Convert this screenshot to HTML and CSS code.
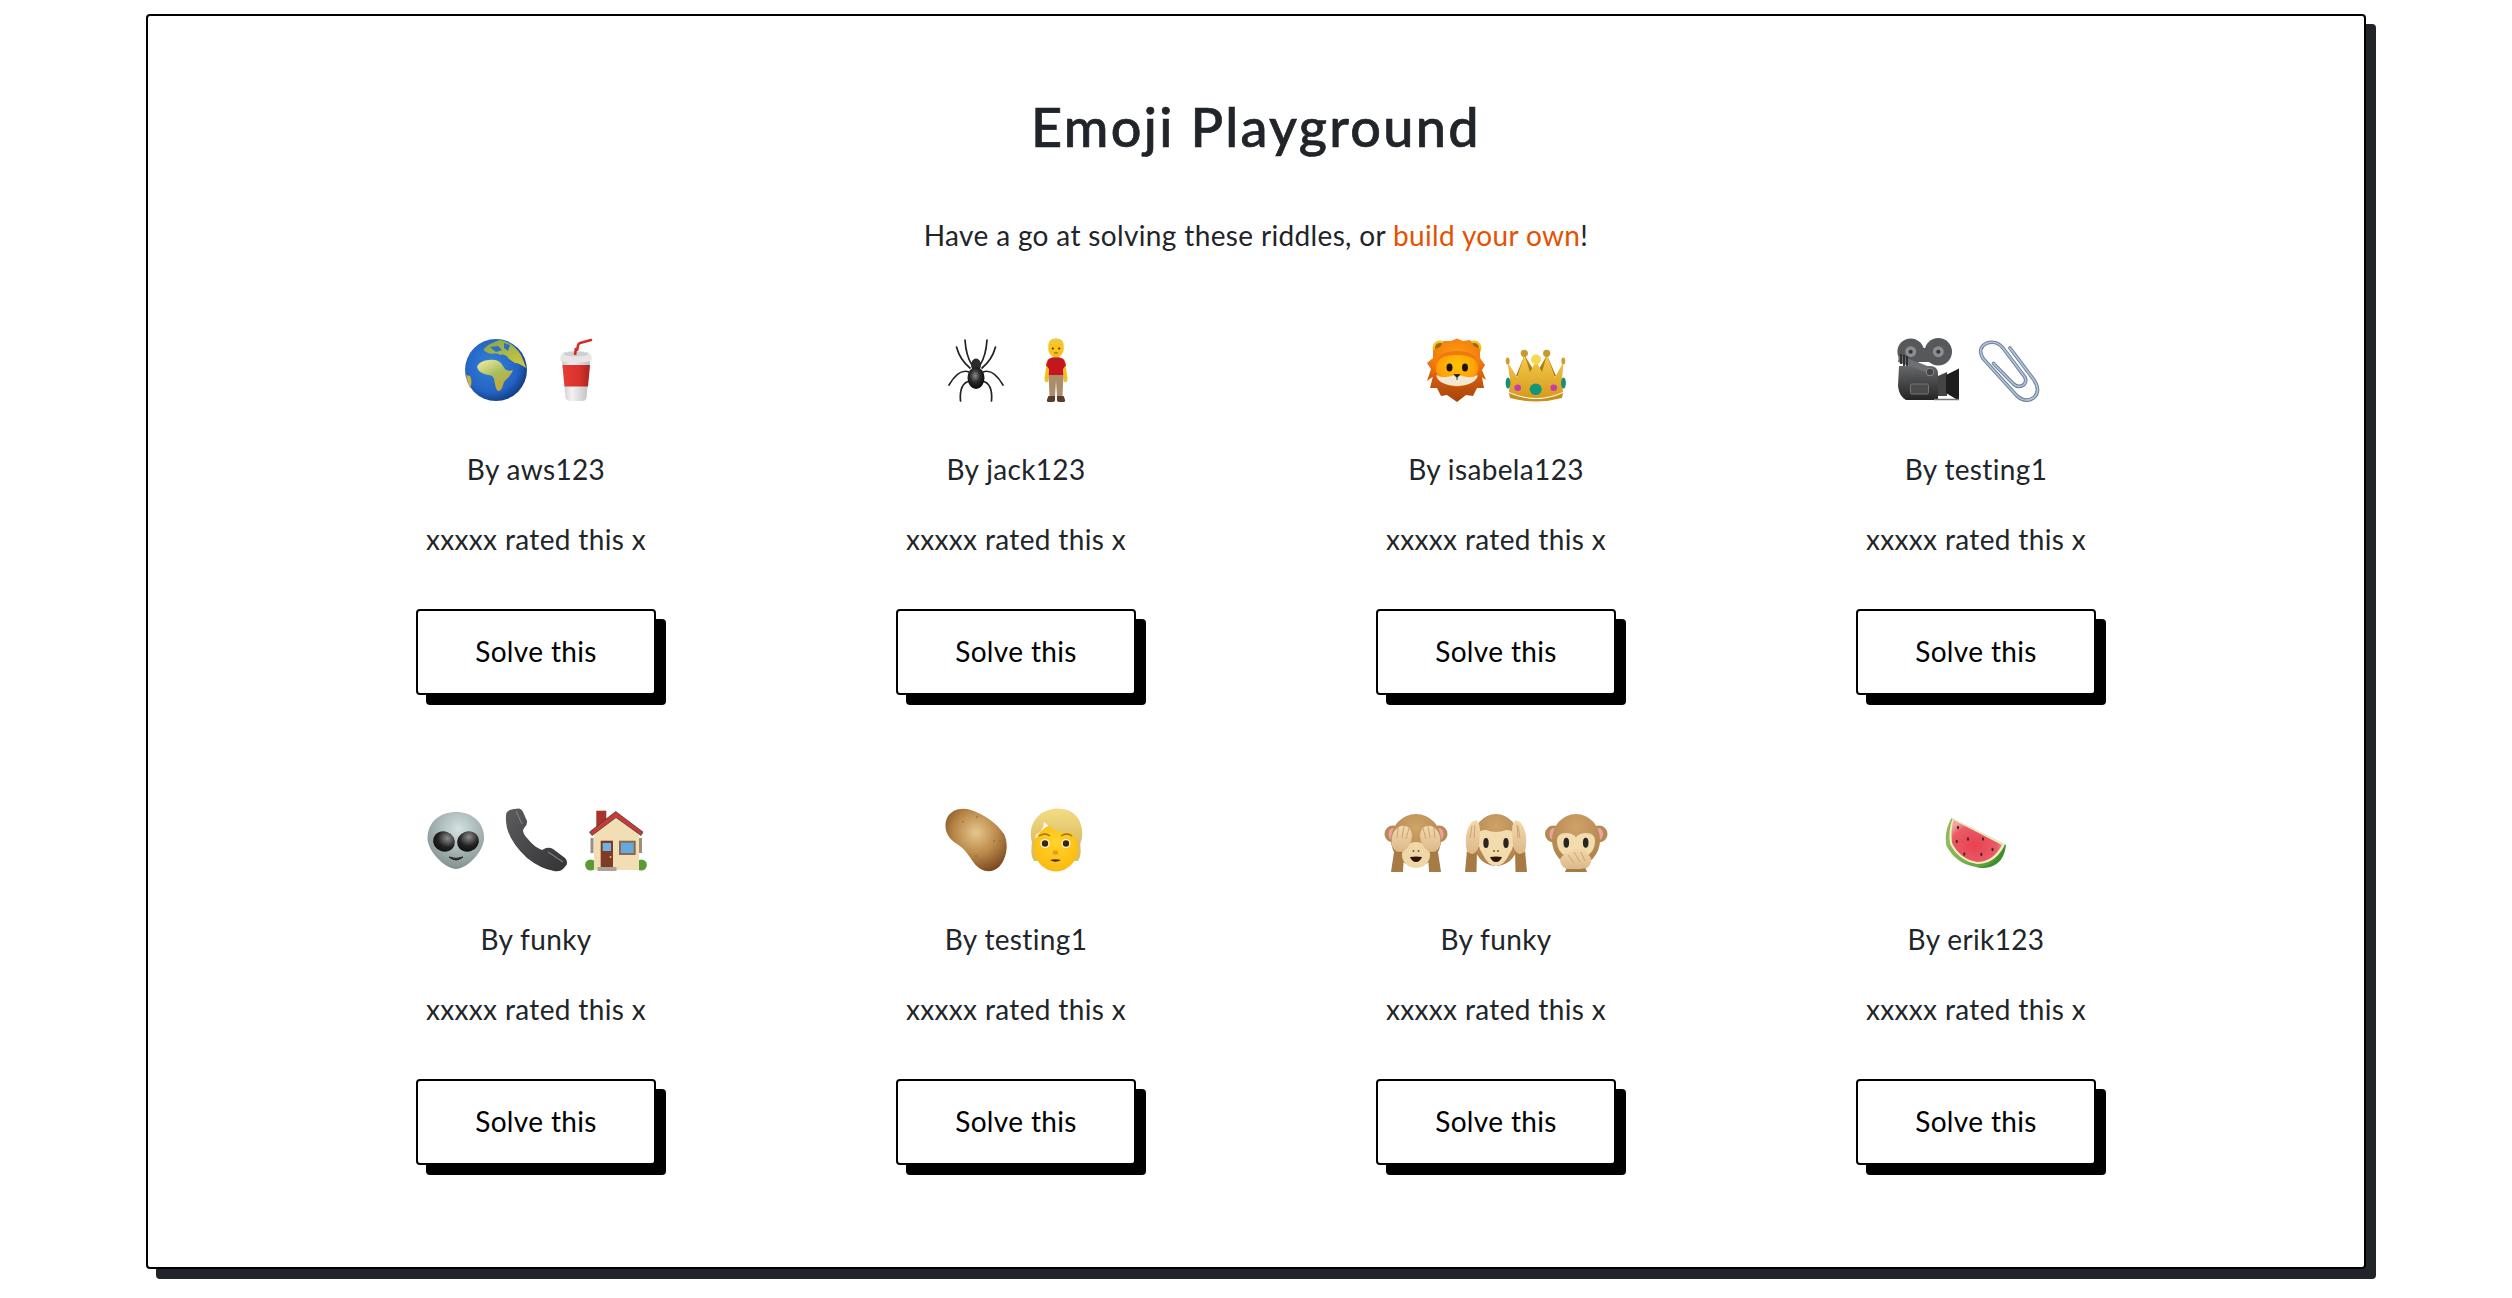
FILE: index.html
```html
<!DOCTYPE html>
<html lang="en">
<head>
    <meta charset="UTF-8">
    <meta name="viewport" content="width=device-width, initial-scale=1.0">
    <title>Emoji Playground</title>
    <link rel="stylesheet" href="styles.css">
</head>
<body>
    <!-- Shared gradients for the emoji drawings -->
    <svg class="defs" aria-hidden="true">
        <defs>
            <radialGradient id="gSea" cx="0.42" cy="0.42" r="0.62"><stop offset="0" stop-color="#3380d8"/><stop offset="0.7" stop-color="#2364c4"/><stop offset="1" stop-color="#123a80"/></radialGradient>
            <linearGradient id="gLand" x1="0" y1="0" x2="0.6" y2="1"><stop offset="0" stop-color="#f5f0a4"/><stop offset="0.55" stop-color="#a9bd5e"/><stop offset="1" stop-color="#c9a53a"/></linearGradient>
            <linearGradient id="gNorth" x1="0" y1="0" x2="1" y2="1"><stop offset="0" stop-color="#7fa64e"/><stop offset="1" stop-color="#d8c93e"/></linearGradient>
            <linearGradient id="gCup" x1="0" y1="0" x2="1" y2="0"><stop offset="0" stop-color="#c9c9c9"/><stop offset="0.35" stop-color="#f2f2f2"/><stop offset="1" stop-color="#bdbdbd"/></linearGradient>
            <linearGradient id="gRed" x1="0" y1="0" x2="1" y2="0"><stop offset="0" stop-color="#e63c34"/><stop offset="0.6" stop-color="#d8332c"/><stop offset="1" stop-color="#a92420"/></linearGradient>
            <radialGradient id="gSpider" cx="0.45" cy="0.4" r="0.6"><stop offset="0" stop-color="#8a8a8a"/><stop offset="0.5" stop-color="#2a2a2a"/><stop offset="1" stop-color="#0a0a0a"/></radialGradient>
            <radialGradient id="gMane" cx="0.5" cy="0.35" r="0.7"><stop offset="0" stop-color="#ff9a12"/><stop offset="0.65" stop-color="#f27a0c"/><stop offset="1" stop-color="#d35f0a"/></radialGradient>
            <linearGradient id="gManeLow" x1="0" y1="0" x2="0" y2="1"><stop offset="0" stop-color="#d9610f"/><stop offset="1" stop-color="#a8420b"/></linearGradient>
            <radialGradient id="gLionFace" cx="0.5" cy="0.4" r="0.6"><stop offset="0" stop-color="#ffc400"/><stop offset="0.7" stop-color="#ffa408"/><stop offset="1" stop-color="#f58a0a"/></radialGradient>
            <linearGradient id="gGold" x1="0" y1="0" x2="0" y2="1"><stop offset="0" stop-color="#f4cc4d"/><stop offset="1" stop-color="#d79a1e"/></linearGradient>
            <linearGradient id="gGoldDark" x1="0" y1="0" x2="0" y2="1"><stop offset="0" stop-color="#c98f22"/><stop offset="1" stop-color="#9a6a12"/></linearGradient>
            <linearGradient id="gCam" x1="0" y1="0" x2="0" y2="1"><stop offset="0" stop-color="#65676a"/><stop offset="1" stop-color="#262425"/></linearGradient>
            <radialGradient id="gAlien" cx="0.55" cy="0.3" r="0.75"><stop offset="0" stop-color="#d4e2e2"/><stop offset="0.6" stop-color="#9fadad"/><stop offset="1" stop-color="#7f8b8b"/></radialGradient>
            <radialGradient id="gAlienEye" cx="0.6" cy="0.3" r="0.8"><stop offset="0" stop-color="#8d8f8f"/><stop offset="0.55" stop-color="#222"/><stop offset="1" stop-color="#0c0c0c"/></radialGradient>
            <linearGradient id="gPhone" x1="0" y1="0" x2="1" y2="1"><stop offset="0" stop-color="#5c5c5e"/><stop offset="1" stop-color="#333335"/></linearGradient>
            <radialGradient id="gPotato" cx="0.5" cy="0.38" r="0.65"><stop offset="0" stop-color="#e6c68c"/><stop offset="0.55" stop-color="#b98849"/><stop offset="1" stop-color="#7c4a22"/></radialGradient>
            <radialGradient id="gFace" cx="0.5" cy="0.4" r="0.65"><stop offset="0" stop-color="#ffd42a"/><stop offset="1" stop-color="#fbb80f"/></radialGradient>
            <linearGradient id="gBlond" x1="0" y1="0" x2="0" y2="1"><stop offset="0" stop-color="#f3dd85"/><stop offset="1" stop-color="#d9b95c"/></linearGradient>
            <radialGradient id="gMonkey" cx="0.5" cy="0.25" r="0.8"><stop offset="0" stop-color="#cfa268"/><stop offset="1" stop-color="#ab7f49"/></radialGradient>
            <linearGradient id="gHand" x1="0" y1="0" x2="0" y2="1"><stop offset="0" stop-color="#f3d9ad"/><stop offset="1" stop-color="#dcb888"/></linearGradient>
            <radialGradient id="gMelon" cx="0.45" cy="0.6" r="0.6"><stop offset="0" stop-color="#e8424f"/><stop offset="0.75" stop-color="#ea5a66"/><stop offset="1" stop-color="#f2a2a0"/></radialGradient>
            <linearGradient id="gRind" x1="0" y1="0" x2="1" y2="0"><stop offset="0" stop-color="#8fbd5f"/><stop offset="1" stop-color="#3d8f2c"/></linearGradient>
        </defs>
    </svg>

    <main class="card">
        <h1 class="titulo">Emoji Playground</h1>
        <p class="intro">Have a go at solving these riddles, or <a href="#" class="enlace">build your own</a>!</p>

        <section class="acertijos">
            <article class="acertijo">
                <div class="emojis">
                    <!-- globe -->
                    <svg class="emoji" viewBox="0 0 64 64" role="img" aria-label="globe">
                        <circle cx="32" cy="32" r="31" fill="url(#gSea)"/>
                        <path d="M13 29C14 25 20 22 25 22C30 21 34 22 37 25L41 31C43 33 46 33 49 32C47 38 42 41 40 44L38 50C36 54 33 54 32 50C30 44 31 40 28 38C24 36 15 37 13 29Z" fill="url(#gLand)"/>
                        <path d="M20 11C24 6 30 4 36 2C44 3 52 9 57 17C59 22 61 26 62 30C58 27 54 25 51 25L45 21C42 16 38 16 36 17C33 14 28 17 24 15C22 14 19 13 20 11Z" fill="url(#gNorth)"/>
                        <path d="M2 37L6 38C8 42 8 46 6 50C4 46 3 42 2 37Z" fill="#c6b23c"/>
                        <path d="M26 9L34 8L38 12L32 14ZM40 5L46 7L44 13L40 10Z" fill="#2d6fc6"/>
                    </svg>
                    <!-- cup -->
                    <svg class="emoji" viewBox="0 0 64 64" role="img" aria-label="cup with straw">
                        <path d="M32 18L34 7.5Q34.5 5.500 36 5L47 2" fill="none" stroke="#d22c26" stroke-width="2.600" stroke-linecap="round"/>
                        <path d="M18 23H46L42.500 60Q42 63 38 63H26Q22.500 63 21.500 60Z" fill="url(#gCup)"/>
                        <path d="M18.500 27H46L44 48.500H20.500Z" fill="url(#gRed)"/>
                        <path d="M19 14.500Q32 11 45 14.500L47.500 18V23Q32 26 16.500 23V18Z" fill="#e6e6e6"/>
                        <ellipse cx="32" cy="16" rx="12" ry="2.500" fill="#cfcfcf"/>
                        <path d="M31 17L32 10" stroke="#d22c26" stroke-width="2.600"/>
                    </svg>
                </div>
                <p class="autor">By aws123</p>
                <p class="valoracion">xxxxx rated this x</p>
                <button class="resolver">Solve this</button>
            </article>

            <article class="acertijo">
                <div class="emojis">
                    <!-- spider -->
                    <svg class="emoji" viewBox="0 0 64 64" role="img" aria-label="spider">
                        <g fill="none" stroke="#222" stroke-width="1.700" stroke-linecap="round" stroke-linejoin="round">
                            <path d="M28 27Q22 18 21 2M26 30Q16 22 12.500 9M25 34Q15 30 5 47M26 43Q15 45 16.500 63"/>
                            <path d="M36 27Q42 18 43 2M38 30Q48 22 51.500 9M39 34Q49 30 59 47M38 43Q49 45 47.500 63"/>
                        </g>
                        <ellipse cx="32" cy="27" rx="5" ry="6.500" fill="#2b2b2b"/>
                        <ellipse cx="32" cy="40" rx="8.500" ry="11" fill="url(#gSpider)"/>
                    </svg>
                    <!-- man standing -->
                    <svg class="emoji" viewBox="0 0 64 64" role="img" aria-label="man">
                        <path d="M23 21L20.500 42Q22 46 24.500 43L26 25ZM41 21L43.500 42Q42 46 39.500 43L38 25Z" fill="#f7bb1f"/>
                        <path d="M24.500 35H39.500L38.500 58H33L32 43L31 58H25.500Z" fill="#ab8d6e"/>
                        <path d="M24.500 21Q32 17 39.500 21L42 27L39 31V37H25V31L22 27Z" fill="#c4161c"/>
                        <path d="M24.500 58H31V62Q31 64 28 64H24Q21.500 63.500 24.500 58ZM33 58H39.500Q42.500 63.500 40 64H36Q33 64 33 62Z" fill="#5a3d28"/>
                        <ellipse cx="32" cy="10.500" rx="7.800" ry="9" fill="#fcc21b"/>
                        <path d="M24.500 10Q23 .5 32 .3Q41 .5 39.500 10Q38 5 33 6Q28 7 26 5.500Q25 7.500 24.500 10Z" fill="#f2c63e"/>
                        <circle cx="28.800" cy="10.500" r="1" fill="#3a2a12"/><circle cx="35.200" cy="10.500" r="1" fill="#3a2a12"/>
                        <path d="M30 15H34" stroke="#7b5a1c" stroke-width="1"/>
                    </svg>
                </div>
                <p class="autor">By jack123</p>
                <p class="valoracion">xxxxx rated this x</p>
                <button class="resolver">Solve this</button>
            </article>

            <article class="acertijo">
                <div class="emojis">
                    <!-- lion -->
                    <svg class="emoji" viewBox="0 0 64 64" role="img" aria-label="lion">
                        <circle cx="16" cy="10" r="7.500" fill="#f0c21c"/><circle cx="16" cy="10" r="5" fill="#a3640f"/>
                        <circle cx="50" cy="10" r="7.500" fill="#f0c21c"/><circle cx="50" cy="10" r="5" fill="#a3640f"/>
                        <path d="M10 34L6 50L13 50L17 58L23 57L33 64L42 57L49 58L53 50L60 50L57 34Z" fill="url(#gManeLow)"/>
                        <path d="M33 .5L39 3L46 2L50 8L56 11L56 20L61 27L58 32L62 42L56 38L50 30H15L10 38L3 43L7 31L3 25L9 20L9 12L16 9L20 3L27 3Z" fill="url(#gMane)"/>
                        <ellipse cx="33" cy="31" rx="21" ry="17.500" fill="url(#gLionFace)"/>
                        <path d="M12 24Q16 13 33 13Q50 13 54 24Q46 16 33 17Q20 16 12 24Z" fill="#ee7a0c"/>
                        <path d="M12 37Q22 42 33 36Q44 42 54 37Q52 47 33 48Q14 47 12 37Z" fill="#f1e7d2"/>
                        <ellipse cx="25.500" cy="29.500" rx="3" ry="4" fill="#1c1208"/><ellipse cx="41" cy="29.500" rx="3" ry="4" fill="#1c1208"/>
                        <path d="M30 36.500H36L33 39.500ZM33 39.500V42" fill="#22160c" stroke="#22160c" stroke-width=".8"/>
                    </svg>
                    <!-- crown -->
                    <svg class="emoji" viewBox="0 0 64 64" role="img" aria-label="crown">
                        <path d="M12 38L20.500 17L32 36L43 17L52 38Z" fill="url(#gGoldDark)"/>
                        <path d="M3.500 24L6 42L5 54Q32 66 59 54L58 42L59.500 24L51 39L43 17L38 34L32 23L26 34L20.500 17L13 39Z" fill="url(#gGold)"/>
                        <path d="M5 55Q32 67 59 55L58 60Q32 67 6 60Z" fill="#c4901e"/>
                        <circle cx="20.300" cy="15.300" r="3.600" fill="#c89a2b"/><circle cx="42.700" cy="15.300" r="3.600" fill="#c89a2b"/>
                        <circle cx="32" cy="21.500" r="5" fill="#f8d84f"/>
                        <ellipse cx="3.700" cy="23" rx="2" ry="3.600" fill="#cf9f2d"/><ellipse cx="59.300" cy="23" rx="2" ry="3.600" fill="#cf9f2d"/>
                        <ellipse cx="4" cy="45" rx="2.400" ry="5.500" fill="#188f74"/><ellipse cx="59.500" cy="45" rx="2.400" ry="5.500" fill="#188f74"/>
                        <circle cx="13.700" cy="49.700" r="3.300" fill="#c83da5"/><circle cx="49.700" cy="49.700" r="3.300" fill="#c83da5"/>
                        <ellipse cx="31.700" cy="51.300" rx="6" ry="5.800" fill="#12967a"/>
                    </svg>
                </div>
                <p class="autor">By isabela123</p>
                <p class="valoracion">xxxxx rated this x</p>
                <button class="resolver">Solve this</button>
            </article>

            <article class="acertijo">
                <div class="emojis emojis-corrido">
                    <!-- movie camera -->
                    <svg class="emoji" viewBox="0 0 64 64" role="img" aria-label="movie camera">
                        <circle cx="14.700" cy="13.700" r="13.300" fill="#56585b"/><circle cx="42.300" cy="13.700" r="13.700" fill="#56585b"/>
                        <rect x="18" y="10" width="20" height="14" fill="#56585b"/>
                        <circle cx="14.700" cy="13.700" r="5.500" fill="#8b8d90"/><circle cx="14.700" cy="13.700" r="2" fill="#333"/>
                        <circle cx="42.300" cy="13.700" r="5.500" fill="#8b8d90"/><circle cx="42.300" cy="13.700" r="2" fill="#333"/>
                        <path d="M42 38L51 34V58H42Z" fill="#444446"/>
                        <path d="M50 37L63 30.500V61H60L50 55Z" fill="#1e1d1e"/>
                        <path d="M3 28H34Q42 28 42 36V62H10Q3 58 2 48Z" fill="url(#gCam)"/>
                        <path d="M3 17L34 29L35 36L2 24Z" fill="#6d6f72"/>
                        <path d="M8 17V28M5 16V26M11 18V28" stroke="#2a2a2a" stroke-width="1.800"/>
                        <circle cx="34" cy="34" r="3.800" fill="#444" stroke="#8a8a8a" stroke-width="1"/>
                        <rect x="14.500" y="46" width="18" height="10" rx="1.500" fill="#4c4b4b" stroke="#7c7b7b" stroke-width=".9"/>
                        <path d="M38 61.500H63" stroke="#77777a" stroke-width="1.500"/>
                    </svg>
                    <!-- paperclip -->
                    <svg class="emoji" viewBox="0 0 64 64" role="img" aria-label="paperclip">
                        <path d="M17.500 25.500L37.500 46Q43 50.500 48 46.500Q52 42 47 36.500L27 10Q20 1.500 10 5.500Q1 10.500 7 20.500L41 58Q50 65.500 58 59.500Q65 53 58 42L34 10" fill="none" stroke="#75818f" stroke-width="3.600" stroke-linecap="round"/>
                        <path d="M17.500 25.500L37.500 46Q43 50.500 48 46.500Q52 42 47 36.500L27 10Q20 1.500 10 5.500Q1 10.500 7 20.500L41 58Q50 65.500 58 59.500Q65 53 58 42L34 10" fill="none" stroke="#a9c6ea" stroke-width="1.600" stroke-linecap="round"/>
                    </svg>
                </div>
                <p class="autor">By testing1</p>
                <p class="valoracion">xxxxx rated this x</p>
                <button class="resolver">Solve this</button>
            </article>

            <article class="acertijo">
                <div class="emojis">
                    <!-- alien -->
                    <svg class="emoji" viewBox="0 0 64 64" role="img" aria-label="alien">
                        <path d="M32 4C48 4 60 14 60 30C60 44 42 61 32 61C22 61 3.500 44 3.500 30C3.500 14 16 4 32 4Z" fill="url(#gAlien)"/>
                        <ellipse cx="20" cy="33.500" rx="11" ry="10" transform="rotate(18 20 33.500)" fill="url(#gAlienEye)"/>
                        <ellipse cx="44" cy="33.500" rx="11" ry="10" transform="rotate(-18 44 33.500)" fill="url(#gAlienEye)"/>
                        <path d="M25 49Q32 55 39 49Q32 52 25 49Z" fill="#222" stroke="#222" stroke-width="1"/>
                    </svg>
                    <!-- telephone receiver -->
                    <svg class="emoji" viewBox="0 0 64 64" role="img" aria-label="telephone">
                        <path d="M2 7Q2 2 10 1L15 .5Q18 1 19.500 5L23 13Q23.500 17 20.500 19.500L19 22Q19 26 23 30Q30 39 38 42L42 40Q46 39 49 41L61 50Q64 53 62.500 57L59 61Q56 64 50 63Q37 61 23 50Q7 35 3 20Q1.500 13 2 7Z" fill="url(#gPhone)"/>
                        <path d="M12 3L18 16M44 44L59 54" stroke="#7c7c7e" stroke-width="1.200" fill="none"/>
                    </svg>
                    <!-- house -->
                    <svg class="emoji" viewBox="0 0 64 64" role="img" aria-label="house">
                        <circle cx="6.700" cy="57" r="5.600" fill="#5c9a34"/><circle cx="57.300" cy="57" r="5.600" fill="#5c9a34"/>
                        <rect x="12.300" y="2.700" width="10" height="16" fill="#a8352c"/>
                        <path d="M10 24L32 7L55 24V62H10Z" fill="#f2deb4"/>
                        <path d="M5.500 24L31.700 3.500L59 24L57 27.500L32 9.500L8 27.500Z" fill="#c93a32" stroke="#2e3a44" stroke-width=".7"/>
                        <rect x="6.500" y="30" width="3" height="15" fill="#9a8f7d"/><rect x="55" y="30" width="3" height="15" fill="#9a8f7d"/>
                        <rect x="16.700" y="32.700" width="12.300" height="26.500" fill="#7e3b26"/>
                        <rect x="18.700" y="35" width="8.300" height="8" fill="#6fb2e4"/>
                        <circle cx="26.500" cy="49" r="1" fill="#f0c040"/>
                        <rect x="35" y="32.700" width="16.700" height="14.300" fill="#8b6a4c"/>
                        <rect x="37" y="34.700" width="12.700" height="10.300" fill="#64a9e0"/>
                        <rect x="13.500" y="59" width="19" height="4" fill="#a9a49a"/>
                    </svg>
                </div>
                <p class="autor">By funky</p>
                <p class="valoracion">xxxxx rated this x</p>
                <button class="resolver">Solve this</button>
            </article>

            <article class="acertijo">
                <div class="emojis">
                    <!-- potato -->
                    <svg class="emoji" viewBox="0 0 64 64" role="img" aria-label="potato">
                        <path d="M3 10C7 2 17 -1 27 2C39 6 52 14 60 26C65 36 63 50 55 59C47 66 37 64 30 55C25 48 21 41 13 36C3 30 -1 20 3 10Z" fill="url(#gPotato)"/>
                        <g fill="#8a5a2c"><circle cx="33" cy="9" r=".8"/><circle cx="50" cy="33" r=".8"/><circle cx="56" cy="33" r=".7"/><circle cx="32" cy="48" r=".8"/><circle cx="19" cy="14" r=".7"/></g>
                    </svg>
                    <!-- blond person -->
                    <svg class="emoji" viewBox="0 0 64 64" role="img" aria-label="blond person">
                        <path d="M9 30Q5 46 10 53L54 53Q59 46 55 30Z" fill="#dcbd62"/>
                        <ellipse cx="32" cy="40" rx="22" ry="23.500" fill="url(#gFace)"/>
                        <path d="M7 30C5 10 20 .5 34 .5C50 .5 60 12 58 30L55 40Q53 30 47 25C36 26 26 20 20 14Q20 22 12 27L9 40Z" fill="url(#gBlond)"/>
                        <circle cx="21" cy="35.500" r="4.600" fill="#fff4d0"/><circle cx="21" cy="35.500" r="3.200" fill="#38270f"/>
                        <circle cx="42" cy="35.500" r="4.600" fill="#fff4d0"/><circle cx="42" cy="35.500" r="3.200" fill="#38270f"/>
                        <path d="M15 28Q21 24 26 28M37 28Q43 24 48 28" stroke="#a0720f" stroke-width="1.300" fill="none"/>
                        <ellipse cx="31.500" cy="44.500" rx="2.800" ry="2.200" fill="#ee9c0c"/>
                        <path d="M26 52Q31.500 50.500 37 52Q31.500 55.500 26 52Z" fill="#4a2a10"/>
                    </svg>
                </div>
                <p class="autor">By testing1</p>
                <p class="valoracion">xxxxx rated this x</p>
                <button class="resolver">Solve this</button>
            </article>

            <article class="acertijo">
                <div class="emojis">
                    <!-- see no evil -->
                    <svg class="emoji" viewBox="0 0 64 64" role="img" aria-label="see no evil monkey">
                        <circle cx="9" cy="26" r="8.500" fill="#b48a55"/><ellipse cx="8.500" cy="26" rx="4" ry="6" fill="#eda2a2"/>
                        <circle cx="55" cy="26" r="8.500" fill="#b48a55"/><ellipse cx="55.500" cy="26" rx="4" ry="6" fill="#eda2a2"/>
                        <ellipse cx="32" cy="32" rx="25" ry="26" fill="url(#gMonkey)"/>
                        <path d="M7 64L10 44H20L19 64ZM57 64L54 44H44L45 64Z" fill="#a67b46"/>
                        <ellipse cx="32" cy="47" rx="14" ry="13" fill="#f0d7a8"/>
                        <path d="M8 38Q6 22 17 18Q27 16 28 28Q27 38 20 43Q12 46 8 38ZM56 38Q58 22 47 18Q37 16 36 28Q37 38 44 43Q52 46 56 38Z" fill="url(#gHand)"/>
                        <path d="M14 20L13 30M20 18L18 30M25 20L22 31M50 20L51 30M44 18L46 30M39 20L42 31" stroke="#c9a477" stroke-width="1"/>
                        <circle cx="29.500" cy="43" r="1" fill="#7a5a34"/><circle cx="34.500" cy="43" r="1" fill="#7a5a34"/>
                        <path d="M26 49Q32 48 38 49Q36 54 32 54Q28 54 26 49Z" fill="#2e1606"/>
                    </svg>
                    <!-- hear no evil -->
                    <svg class="emoji" viewBox="0 0 64 64" role="img" aria-label="hear no evil monkey">
                        <ellipse cx="32" cy="32" rx="23" ry="26" fill="url(#gMonkey)"/>
                        <path d="M14 27Q14 22 22 22Q32 26 42 22Q50 22 50 27Q50 40 46 45Q40 58 32 58Q24 58 18 45Q14 40 14 27Z" fill="#f2dcae"/>
                        <path d="M1 64L3 42H13L12.500 64ZM63 64L61 42H51L51.500 64Z" fill="#a67b46"/>
                        <path d="M3 44Q-1 24 8 14Q15 8 16 22L15 38Q13 45 8 46ZM61 44Q65 24 56 14Q49 8 48 22L49 38Q51 45 56 46Z" fill="url(#gHand)"/>
                        <path d="M6 30L8 18M10 30L11 17M54 18L56 30M53 17L54 30" stroke="#c9a477" stroke-width="1"/>
                        <ellipse cx="22" cy="35" rx="2.700" ry="5" fill="#2b2522"/><ellipse cx="42" cy="35" rx="2.700" ry="5" fill="#2b2522"/>
                        <circle cx="30" cy="43" r="1" fill="#7a5a34"/><circle cx="34" cy="43" r="1" fill="#7a5a34"/>
                        <path d="M26 49Q32 48 38 49Q36 54 32 54Q28 54 26 49Z" fill="#2e1606"/>
                    </svg>
                    <!-- speak no evil -->
                    <svg class="emoji" viewBox="0 0 64 64" role="img" aria-label="speak no evil monkey">
                        <circle cx="9.500" cy="26" r="8.500" fill="#b48a55"/><ellipse cx="9.500" cy="26" rx="4" ry="6" fill="#eda2a2"/>
                        <circle cx="55" cy="26" r="8.500" fill="#b48a55"/><ellipse cx="55" cy="26" rx="4" ry="6" fill="#eda2a2"/>
                        <ellipse cx="32" cy="32" rx="24" ry="26" fill="url(#gMonkey)"/>
                        <path d="M13 33Q13 25 22 25Q28 25 32 29Q36 25 42 25Q51 25 51 33Q51 44 42 48H22Q13 44 13 33Z" fill="#f2dcae"/>
                        <path d="M21 64L25 54H39L43 64Z" fill="#a67b46"/>
                        <ellipse cx="22.300" cy="34.700" rx="2.800" ry="5" fill="#2b2522"/><ellipse cx="41.700" cy="34.700" rx="2.800" ry="5" fill="#2b2522"/>
                        <path d="M17 56Q14 50 21 46L31 41Q37 39 42 43L47 50Q48 56 43 60L36 61H23Q19 60 17 56Z" fill="url(#gHand)"/>
                        <path d="M24 47L30 55M30 44L36 54M37 44L41 53" stroke="#c9a477" stroke-width="1"/>
                    </svg>
                </div>
                <p class="autor">By funky</p>
                <p class="valoracion">xxxxx rated this x</p>
                <button class="resolver">Solve this</button>
            </article>

            <article class="acertijo">
                <div class="emojis">
                    <!-- watermelon -->
                    <svg class="emoji" viewBox="0 0 64 64" role="img" aria-label="watermelon">
                        <path d="M62 37Q60 55 46 59Q38 61 32 59L40 54Z" fill="#3d8f2c"/>
                        <path d="M7.500 10L62 37Q52 60 32 59Q12 56 2.500 38Q-.5 24 7.500 10Z" fill="url(#gRind)"/>
                        <path d="M8.500 10.500L61 36.500L59.500 39.500Q50 56 33 56Q15 53 6 36Q4 23 8.500 10.500Z" fill="#f2efc0"/>
                        <path d="M9.500 12L58 37Q49 54 33 54Q16 51 8 35Q6.500 23 9.500 12Z" fill="url(#gMelon)"/>
                        <g fill="#3b2b2b"><ellipse cx="14" cy="19.500" rx="1.100" ry="1.700"/><ellipse cx="12.700" cy="33.500" rx="1.100" ry="1.700"/><ellipse cx="24" cy="31" rx="1.100" ry="1.700"/><ellipse cx="39" cy="31" rx="1.100" ry="1.700"/><ellipse cx="20.300" cy="46" rx="1.100" ry="1.700"/><ellipse cx="37.300" cy="46.500" rx="1.100" ry="1.700"/><ellipse cx="48.500" cy="41.500" rx="1.100" ry="1.700"/></g>
                    </svg>
                </div>
                <p class="autor">By erik123</p>
                <p class="valoracion">xxxxx rated this x</p>
                <button class="resolver">Solve this</button>
            </article>
        </section>
    </main>
</body>
</html>
```

FILE: styles.css
```css
body {
    box-sizing: border-box;
    min-height: 1298px;
    margin: 0;
    padding-top: 14px;
    background-color: white;
    color: #212529;
    font-family: "Lato", "Noto Sans", sans-serif;
    letter-spacing: 0.35px;
}

.defs {
    display: block;
    width: 0;
    height: 0;
}

.card {
    box-sizing: border-box;
    width: 2220px;
    height: 1255px;
    margin: 0 auto;
    padding-top: 80px;
    background-color: white;
    border: 2px solid black;
    border-radius: 4px;
    box-shadow: 10px 10px 0 #212529;
    text-align: center;
}

.titulo {
    margin: 0 0 56px;
    font-size: 54px;
    font-weight: 500;
    line-height: 62px;
    letter-spacing: 2.3px;
    -webkit-text-stroke: 0.7px #212529; /* a little heavier, like the rounded original */
}

.intro {
    margin: 0 0 82px;
    font-size: 28px;
    line-height: 42px;
}

.enlace {
    color: #e65100;
    text-decoration: none;
}

.acertijos {
    display: grid;
    grid-template-columns: repeat(4, 480px);
    grid-auto-rows: 470px;
    justify-content: center;
}

.acertijo {
    display: flex;
    flex-direction: column;
    align-items: center;
}

.emojis {
    display: flex;
    gap: 16px;
    height: 64px;
    margin-bottom: 46px;
}

/* this row carries a trailing space in the original, so it sits a little left */
.emojis-corrido {
    margin-right: 16px;
}

.emoji {
    display: block;
    width: 64px;
    height: 64px;
}

.autor,
.valoracion {
    margin: 0;
    font-size: 28px;
    line-height: 42px;
}

.autor {
    margin-bottom: 28px;
}

.valoracion {
    margin-bottom: 49px;
}

.resolver {
    box-sizing: border-box;
    width: 240px;
    height: 86px;
    padding: 0 0 2px;
    background-color: white;
    color: black;
    border: 2px solid black;
    border-radius: 4px;
    box-shadow: 10px 10px 0 black;
    font-family: inherit;
    font-size: 28px;
    letter-spacing: inherit;
    cursor: pointer;
}
```
